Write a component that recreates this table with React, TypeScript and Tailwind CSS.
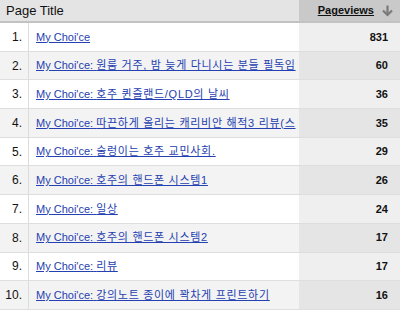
import React from "react";

type Row = { sub?: string; views: number };

// every title starts with the blog name; sub is the post name after the colon
const rows: Row[] = [
  { views: 831 },
  { sub: "원룸 거주, 밤 늦게 다니시는 분들 필독임", views: 60 },
  { sub: "호주 퀸즐랜드/QLD의 날씨", views: 36 },
  { sub: "따끈하게 올리는 캐리비안 해적3 리뷰(스", views: 35 },
  { sub: "술렁이는 호주 교민사회.", views: 29 },
  { sub: "호주의 핸드폰 시스템1", views: 26 },
  { sub: "일상", views: 24 },
  { sub: "호주의 핸드폰 시스템2", views: 17 },
  { sub: "리뷰", views: 17 },
  { sub: "강의노트 종이에 꽉차게 프린트하기", views: 16 },
];

function SortDownIcon() {
  return (
    <svg width="13" height="13" viewBox="0 0 13 13" fill="none">
      <path d="M6.5 1.5v9" stroke="#7a7a7a" strokeWidth="2.2" />
      <path d="M2 6.5l4.5 4.5 4.5-4.5" stroke="#7a7a7a" strokeWidth="2.2" />
    </svg>
  );
}

export default function App() {
  return (
    <div
      className="w-[400px] h-[310px] overflow-hidden bg-white"
      style={{ fontFamily: '"Liberation Sans", Arial, "Noto Sans CJK KR", sans-serif' }}
    >
      <div className="flex h-[23px] border-b-2 border-[#c2c2c2]">
        <div className="flex flex-1 items-center bg-[#e4e4e4] pl-[6px] text-[13px] text-[#111]">
          Page Title
        </div>
        <div className="flex w-[101px] items-center justify-end gap-[7px] bg-[#c9c9c9] pr-[6px]">
          <span className="text-[11px] font-bold text-[#111] underline">Pageviews</span>
          <SortDownIcon />
        </div>
      </div>

      {rows.map((r, i) => {
        const even = i % 2 === 1;
        return (
          <div
            key={i}
            className={`flex h-[28.7px] border-b border-[#dedede] ${
              even ? "bg-[#f3f3f3]" : "bg-white"
            }`}
          >
            <div className="flex w-[29px] shrink-0 items-center justify-end border-r border-[#dcdcdc] pr-[6px] text-[12px] text-[#111]">
              {i + 1}.
            </div>
            <div className="flex min-w-0 flex-1 items-center overflow-hidden whitespace-nowrap pl-[7px] pr-[4px]">
              <a href="#" className="text-[11px] text-[#2540b0] underline">
                My Choi'ce
                {r.sub && (
                  <>
                    :{" "}
                    <span className="tracking-[0.7px]">{r.sub}</span>
                  </>
                )}
              </a>
            </div>
            <div
              className={`flex w-[101px] shrink-0 items-center justify-end pr-[12px] text-[11px] font-bold text-[#111] ${
                even ? "bg-[#e5e5e5]" : "bg-[#efefef]"
              }`}
            >
              {r.views}
            </div>
          </div>
        );
      })}
    </div>
  );
}
